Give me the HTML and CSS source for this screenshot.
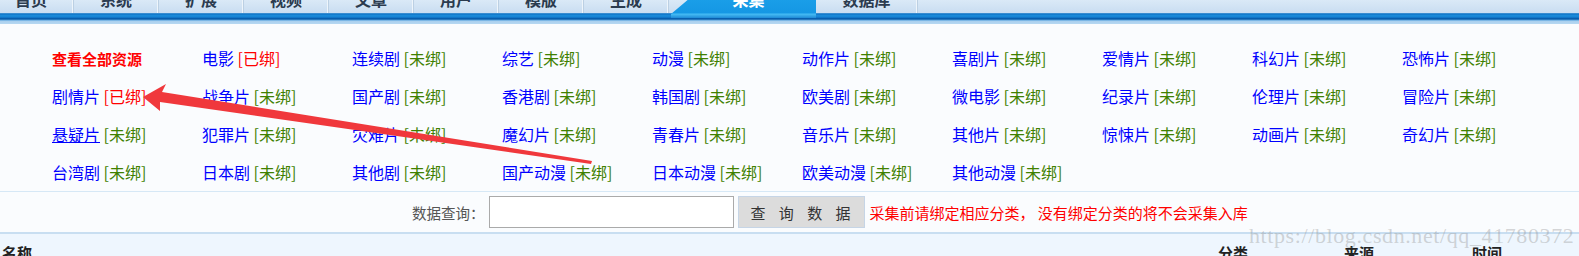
FILE: index.html
```html
<!DOCTYPE html>
<html lang="zh-CN">
<head>
  <meta charset="UTF-8">
  <title>采集 - 资源库</title>
  <link rel="stylesheet" href="styles.css">
</head>
<body>
  <div class="topbar">
    <ul class="tabs">
      <li>首页</li>
      <li>系统</li>
      <li>扩展</li>
      <li>视频</li>
      <li>文章</li>
      <li>用户</li>
      <li>模版</li>
      <li>生成</li>
      <li class="active">采集</li>
      <li class="wide">数据库</li>
    </ul>
  </div>

  <div class="types">
    <div class="type"><a class="all" href="#">查看全部资源</a></div>
    <div class="type"><a href="#">电影</a> <span class="bound">[已绑]</span></div>
    <div class="type"><a href="#">连续剧</a> <span class="unbound">[未绑]</span></div>
    <div class="type"><a href="#">综艺</a> <span class="unbound">[未绑]</span></div>
    <div class="type"><a href="#">动漫</a> <span class="unbound">[未绑]</span></div>
    <div class="type"><a href="#">动作片</a> <span class="unbound">[未绑]</span></div>
    <div class="type"><a href="#">喜剧片</a> <span class="unbound">[未绑]</span></div>
    <div class="type"><a href="#">爱情片</a> <span class="unbound">[未绑]</span></div>
    <div class="type"><a href="#">科幻片</a> <span class="unbound">[未绑]</span></div>
    <div class="type"><a href="#">恐怖片</a> <span class="unbound">[未绑]</span></div>

    <div class="type"><a href="#">剧情片</a> <span class="bound">[已绑]</span></div>
    <div class="type"><a href="#">战争片</a> <span class="unbound">[未绑]</span></div>
    <div class="type"><a href="#">国产剧</a> <span class="unbound">[未绑]</span></div>
    <div class="type"><a href="#">香港剧</a> <span class="unbound">[未绑]</span></div>
    <div class="type"><a href="#">韩国剧</a> <span class="unbound">[未绑]</span></div>
    <div class="type"><a href="#">欧美剧</a> <span class="unbound">[未绑]</span></div>
    <div class="type"><a href="#">微电影</a> <span class="unbound">[未绑]</span></div>
    <div class="type"><a href="#">纪录片</a> <span class="unbound">[未绑]</span></div>
    <div class="type"><a href="#">伦理片</a> <span class="unbound">[未绑]</span></div>
    <div class="type"><a href="#">冒险片</a> <span class="unbound">[未绑]</span></div>

    <div class="type"><a class="hover" href="#">悬疑片</a> <span class="unbound">[未绑]</span></div>
    <div class="type"><a href="#">犯罪片</a> <span class="unbound">[未绑]</span></div>
    <div class="type"><a href="#">灾难片</a> <span class="unbound">[未绑]</span></div>
    <div class="type"><a href="#">魔幻片</a> <span class="unbound">[未绑]</span></div>
    <div class="type"><a href="#">青春片</a> <span class="unbound">[未绑]</span></div>
    <div class="type"><a href="#">音乐片</a> <span class="unbound">[未绑]</span></div>
    <div class="type"><a href="#">其他片</a> <span class="unbound">[未绑]</span></div>
    <div class="type"><a href="#">惊悚片</a> <span class="unbound">[未绑]</span></div>
    <div class="type"><a href="#">动画片</a> <span class="unbound">[未绑]</span></div>
    <div class="type"><a href="#">奇幻片</a> <span class="unbound">[未绑]</span></div>

    <div class="type"><a href="#">台湾剧</a> <span class="unbound">[未绑]</span></div>
    <div class="type"><a href="#">日本剧</a> <span class="unbound">[未绑]</span></div>
    <div class="type"><a href="#">其他剧</a> <span class="unbound">[未绑]</span></div>
    <div class="type"><a href="#">国产动漫</a> <span class="unbound">[未绑]</span></div>
    <div class="type"><a href="#">日本动漫</a> <span class="unbound">[未绑]</span></div>
    <div class="type"><a href="#">欧美动漫</a> <span class="unbound">[未绑]</span></div>
    <div class="type"><a href="#">其他动漫</a> <span class="unbound">[未绑]</span></div>
  </div>

  <form class="search">
    <label for="wd">数据查询：</label>
    <input type="text" id="wd">
    <button type="button">查 询 数 据</button>
    <span class="tip">采集前请绑定相应分类， 没有绑定分类的将不会采集入库</span>
  </form>

  <div class="list-head">
    <span class="col-name">名称</span>
    <span class="col-type">分类</span>
    <span class="col-from">来源</span>
    <span class="col-time">时间</span>
  </div>

  <!-- 截图上的标注箭头和水印 -->
  <svg class="arrow" width="620" height="200" viewBox="0 0 620 200">
    <polygon points="143,97 166,84 162,92 592,161 591,164 160,102 160,111" fill="#f0383c"/>
  </svg>
  <div class="watermark">https://blog.csdn.net/qq_41780372</div>
</body>
</html>
```

FILE: styles.css
```css
:root {
  --link: #0000ff;
  --red: #ff0000;
  --green: #3f8000;
  --line: #d6e8f6;
  --page-bg: #fafcfe;
}

body {
  margin: 0;
  background: var(--page-bg);
  font-family: "Noto Sans CJK SC", "Noto Sans", sans-serif;
  font-size: 16px;
  overflow: hidden;
  position: relative;
  height: 256px;
}

/* 顶部导航 */
.topbar {
  display: flow-root;
  height: 24px;
  background: linear-gradient(to bottom,
    #dae9f7 0, #c9ddf1 13px,
    #63abe1 13px, #0b6cc0 14px, #1b8bd9 15px, #1684d4 17px,
    #0b67bb 18px, #05549f 19px, #4c9ddc 20px,
    #a9cfee 21px, #b6d8f2 24px);
}

.tabs {
  list-style: none;
  margin: -13px 0 0 -11px;
  padding: 0;
  display: flex;
  align-items: flex-start;
}

.tabs li {
  width: 84px;
  height: 26px;
  line-height: 24px;
  text-align: center;
  font-weight: bold;
  color: #2b3b4f;
  border-right: 1px solid #bcd0e3;
  box-shadow: inset -1px 0 0 #eef5fb;
}

.tabs li.active {
  width: 145px;
  height: 31px;
  margin-left: 2px;
  color: #fff;
  border-right: 0;
  box-shadow: none;
  background: linear-gradient(to bottom, #1ea4ec 0, #1597e4 26px, #46bdf5 27px, #1e8ad6 31px);
  clip-path: polygon(0 100%, 0 calc(100% - 4px), 32px 0, 100% 0, 100% 100%);
  text-indent: 10px;
}

.tabs li.wide {
  width: 101px;
}

/* 分类列表 */
.types {
  display: grid;
  grid-template-columns: repeat(10, 150px);
  grid-auto-rows: 38px;
  padding: 15px 0 0 52px;
  border-bottom: 1px solid var(--line);
}

.type {
  line-height: 38px;
  white-space: nowrap;
}

.type a {
  color: var(--link);
  text-decoration: none;
}

.type a.all {
  color: var(--red);
  font-weight: bold;
  font-size: 15px;
}

.type a.hover {
  text-decoration: underline;
}

.bound {
  color: var(--red);
}

.unbound {
  color: var(--green);
}

/* 搜索 */
.search {
  display: flex;
  align-items: center;
  height: 40px;
  padding-left: 412px;
  border-bottom: 2px solid #c8def1;
  font-size: 14.5px;
}

.search label {
  color: #555;
  margin-right: 4px;
}

.search input {
  box-sizing: border-box;
  width: 245px;
  height: 32px;
  border: 1px solid #aaa;
  margin: 0;
  padding: 0 4px;
  background: #fff;
}

.search button {
  box-sizing: border-box;
  width: 127px;
  height: 32px;
  margin: 0 0 0 4px;
  border: 1px solid #c6d5e6;
  background: #dcdcdc;
  color: #333;
  font-family: inherit;
  font-size: 15px;
  letter-spacing: 5px;
  padding: 0 0 0 4px;
}

.search .tip {
  color: var(--red);
  margin-left: 5px;
  font-size: 15px;
}

/* 列表表头 */
.list-head {
  background: #eef6fe;
  height: 22px;
  overflow: hidden;
  display: flex;
  font-weight: bold;
  font-size: 15px;
  color: #222;
  line-height: 38px;
}

.col-name {
  width: 1216px;
  padding-left: 2px;
}

.col-type {
  width: 126px;
}

.col-from {
  width: 128px;
}

.arrow {
  position: absolute;
  left: 0;
  top: 0;
  pointer-events: none;
}

.watermark {
  position: absolute;
  left: 1249px;
  top: 223px;
  font-family: "Liberation Serif", "DejaVu Serif", serif;
  font-size: 22px;
  color: rgba(150, 150, 150, 0.4);
  letter-spacing: 0.6px;
  pointer-events: none;
}
```
